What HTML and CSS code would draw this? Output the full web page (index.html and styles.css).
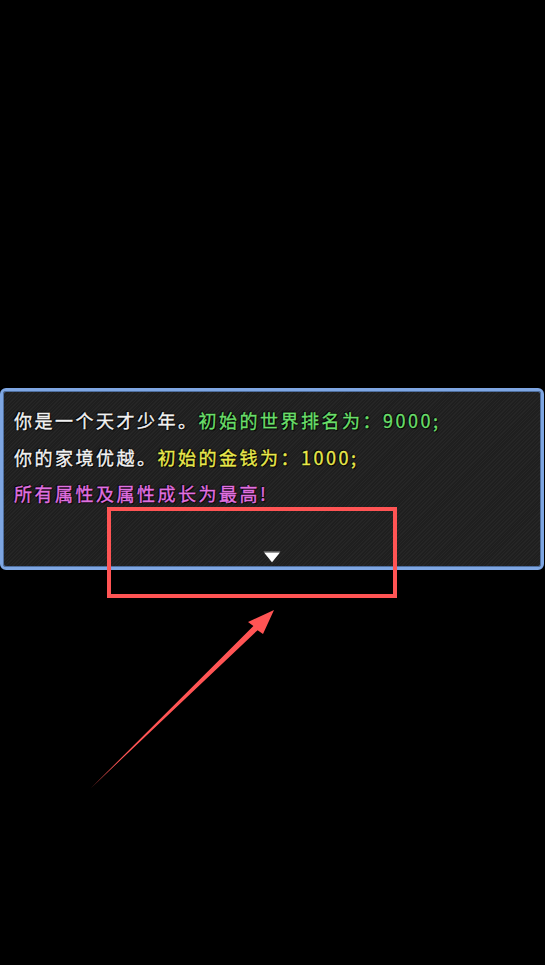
FILE: index.html
```html
<!DOCTYPE html>
<html lang="zh">
<head>
<meta charset="utf-8">
<link rel="stylesheet" href="styles.css">
</head>
<body>
<div class="stage">
  <div class="msgbox">
    <div class="lines">
      <p class="line"><span class="white">你是一个天才少年。</span><span class="green">初始的世界排名为：9000;</span></p>
      <p class="line"><span class="white">你的家境优越。</span><span class="yellow">初始的金钱为：1000;</span></p>
      <p class="line"><span class="pink">所有属性及属性成长为最高!</span></p>
    </div>
    <div class="pause">
      <svg width="18" height="12" viewBox="0 0 18 12">
        <polygon points="0.5,0.5 17.5,0.5 9,11.5" fill="#9a9a9a"/>
        <polygon points="1.5,2 16.5,2 9,11" fill="#ffffff"/>
      </svg>
    </div>
  </div>
  <div class="highlight"></div>
  <svg class="pointer" width="545" height="965" viewBox="0 0 545 965">
    <polygon points="90,789 253.4,625.9 248,622 274,610 263,634 257.6,630.2" fill="#ff5454"/>
  </svg>
</div>
</body>
</html>
```
FILE: styles.css
```css
html, body {
  margin: 0;
  padding: 0;
  background: #000;
}
body {
  width: 545px;
  height: 965px;
  overflow: hidden;
  font-family: "Noto Sans CJK SC", "Noto Sans", sans-serif;
}
.stage {
  position: relative;
  width: 545px;
  height: 965px;
  padding-top: 388px;
  box-sizing: border-box;
}
.msgbox {
  width: 544px;
  height: 182px;
  box-sizing: border-box;
  border: 3px solid #7ea6e2;
  border-radius: 6px;
  box-shadow: inset 0 0 0 1px #4f6f9f;
  background-color: #1f1f1f;
  background-image: repeating-linear-gradient(135deg, rgba(255,255,255,0.03) 0px, rgba(255,255,255,0.03) 1px, rgba(0,0,0,0) 1px, rgba(0,0,0,0) 2.5px);
  padding: 11px 11px 4px 11px;
  display: flex;
  flex-direction: column;
}
.lines {
  display: flex;
  flex-direction: column;
}
.line {
  margin: 0;
  font-size: 18px;
  line-height: 36.5px;
  letter-spacing: 2.5px;
  white-space: nowrap;
  -webkit-text-stroke: 0.35px currentColor;
  text-shadow: 0 0 2px #000, 1px 1px 1px #000, -1px -1px 1px #000;
}
.white { color: #f2f2f2; }
.green { color: #6ade6a; }
.yellow { color: #e8e84c; }
.pink { color: #e070e0; }
.pause {
  margin-top: auto;
  display: flex;
  justify-content: center;
  height: 12px;
}
.pause svg { display: block; }
.highlight {
  position: absolute;
  left: 107px;
  top: 507px;
  width: 290px;
  height: 91px;
  box-sizing: border-box;
  border: 4px solid #ff5454;
}
.pointer {
  position: absolute;
  left: 0;
  top: 0;
}
```
